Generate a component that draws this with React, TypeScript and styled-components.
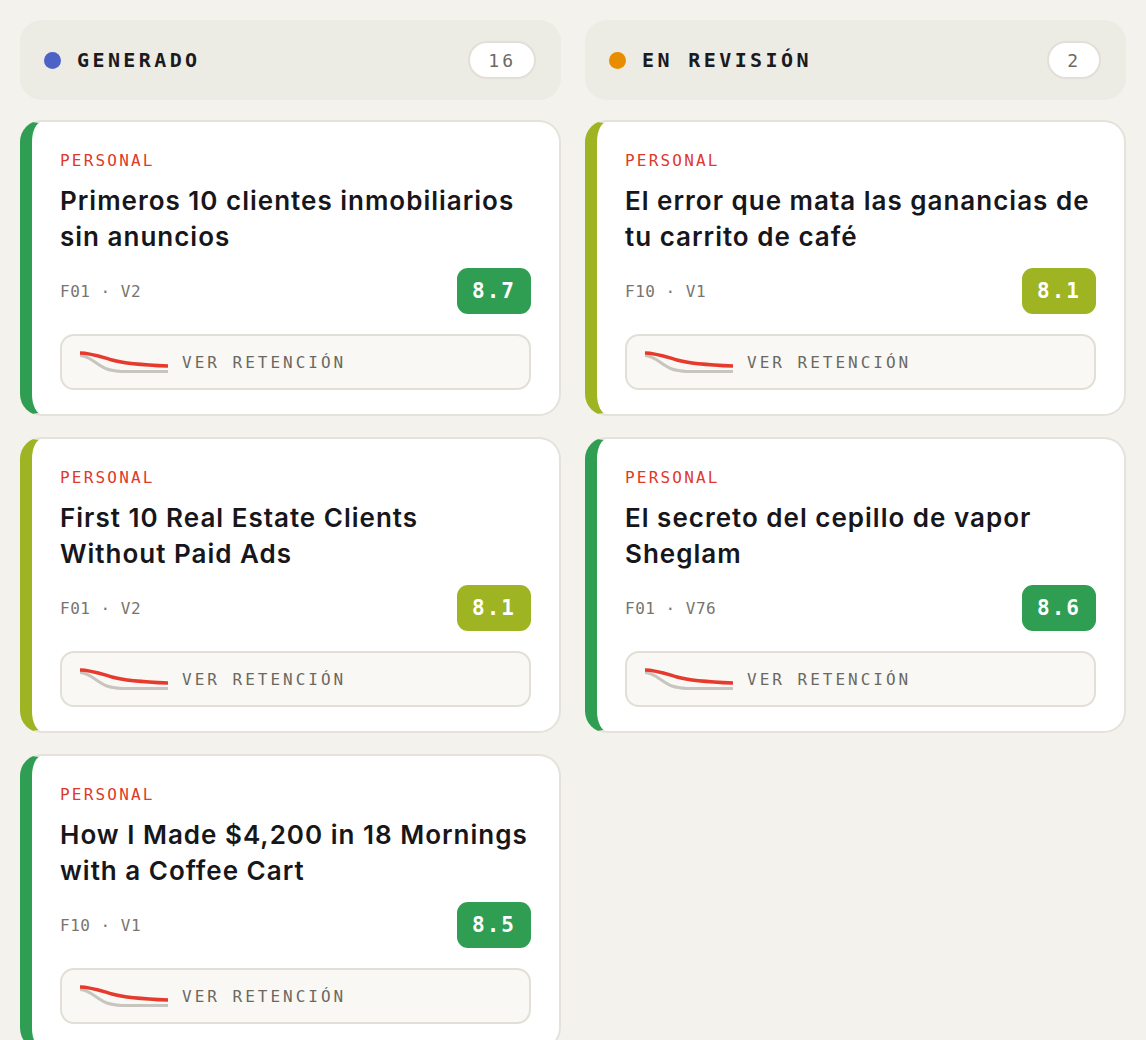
import styled, { createGlobalStyle } from "styled-components";

const GREEN = "#2f9e52";
const OLIVE = "#9fb422";

const MONO = `"DejaVu Sans Mono", "Liberation Mono", monospace`;
const SANS = `Inter, "Noto Sans", "Liberation Sans", sans-serif`;

const GlobalStyle = createGlobalStyle`
  html, body {
    margin: 0;
    background: #f3f2ed;
  }
  * {
    box-sizing: border-box;
  }
`;

const Board = styled.div`
  display: grid;
  grid-template-columns: 1fr 1fr;
  gap: 24px;
  padding: 20px;
  align-items: start;
`;

const Column = styled.section`
  display: flex;
  flex-direction: column;
  gap: 21px;
`;

const ColumnHeader = styled.header`
  display: flex;
  align-items: center;
  height: 80px;
  margin-bottom: -1px;
  padding: 0 25px 0 24px;
  background: #ecebe4;
  border-radius: 22px;
`;

const Dot = styled.span<{ $color: string }>`
  width: 17px;
  height: 17px;
  border-radius: 50%;
  background: ${(p) => p.$color};
  margin-right: 16px;
`;

const ColumnTitle = styled.h2`
  flex: 1;
  margin: 0;
  font-family: ${MONO};
  font-size: 20px;
  font-weight: 600;
  letter-spacing: 3.4px;
  color: #1b1a1e;
`;

const CountPill = styled.span`
  display: flex;
  align-items: center;
  justify-content: center;
  min-width: 52px;
  height: 38px;
  padding: 0 18px;
  background: #fff;
  border: 2px solid #e2dfd8;
  border-radius: 19px;
  font-family: ${MONO};
  font-size: 18px;
  letter-spacing: 3px;
  color: #6d6a63;
`;

const Card = styled.article<{ $accent: string }>`
  background: #fff;
  border: 2px solid #e5e2db;
  border-left: 12px solid ${(p) => p.$accent};
  border-radius: 22px;
  padding: 29px 28px 24px 28px;
`;

const Tag = styled.div`
  font-family: ${MONO};
  font-size: 16px;
  line-height: 20px;
  letter-spacing: 2.2px;
  color: #e0382b;
`;

const Title = styled.h3`
  margin: 12px 0 0;
  font-family: ${SANS};
  font-size: 26px;
  font-weight: 600;
  line-height: 36px;
  letter-spacing: 1px;
  color: #17161a;
`;

const MetaRow = styled.div`
  display: flex;
  align-items: center;
  justify-content: space-between;
  margin-top: 13px;
`;

const Meta = styled.span`
  font-family: ${MONO};
  font-size: 16px;
  letter-spacing: 0.5px;
  color: #77756e;
`;

const Score = styled.span<{ $color: string }>`
  display: flex;
  align-items: center;
  justify-content: center;
  width: 74px;
  height: 46px;
  border-radius: 11px;
  background: ${(p) => p.$color};
  font-family: ${MONO};
  font-size: 21px;
  font-weight: 700;
  letter-spacing: 2px;
  color: #fff;
`;

const RetentionButton = styled.button`
  display: flex;
  align-items: center;
  gap: 14px;
  width: 100%;
  height: 56px;
  margin-top: 20px;
  padding: 0 18px;
  background: #f9f8f4;
  border: 2px solid #e2dfd7;
  border-radius: 14px;
  font-family: ${MONO};
  font-size: 16px;
  letter-spacing: 3px;
  color: #6b6862;
  cursor: pointer;
`;

function Sparkline() {
  return (
    <svg width="88" height="24" viewBox="0 0 88 24" fill="none">
      <path
        d="M0 5.5 C 10 5.5, 17 15.5, 27 19 S 50 21.5, 88 21.5"
        stroke="#c7c5bd"
        strokeWidth="3"
      />
      <path
        d="M0 3 C 10 3, 20 6.5, 32 10 S 62 15, 88 16"
        stroke="#e53a2c"
        strokeWidth="3.4"
      />
    </svg>
  );
}

type Item = {
  title: string;
  meta: string;
  score: string;
  color: string;
};

const columns: {
  name: string;
  dot: string;
  count: number;
  items: Item[];
}[] = [
  {
    name: "GENERADO",
    dot: "#4d62c6",
    count: 16,
    items: [
      {
        title: "Primeros 10 clientes inmobiliarios sin anuncios",
        meta: "F01 · V2",
        score: "8.7",
        color: GREEN,
      },
      {
        title: "First 10 Real Estate Clients Without Paid Ads",
        meta: "F01 · V2",
        score: "8.1",
        color: OLIVE,
      },
      {
        title: "How I Made $4,200 in 18 Mornings with a Coffee Cart",
        meta: "F10 · V1",
        score: "8.5",
        color: GREEN,
      },
    ],
  },
  {
    name: "EN REVISIÓN",
    dot: "#e88c00",
    count: 2,
    items: [
      {
        title: "El error que mata las ganancias de tu carrito de café",
        meta: "F10 · V1",
        score: "8.1",
        color: OLIVE,
      },
      {
        title: "El secreto del cepillo de vapor Sheglam",
        meta: "F01 · V76",
        score: "8.6",
        color: GREEN,
      },
    ],
  },
];

export default function App() {
  return (
    <>
      <GlobalStyle />
      <Board>
        {columns.map((col) => (
          <Column key={col.name}>
            <ColumnHeader>
              <Dot $color={col.dot} />
              <ColumnTitle>{col.name}</ColumnTitle>
              <CountPill>{col.count}</CountPill>
            </ColumnHeader>
            {col.items.map((item, i) => (
              <Card key={i} $accent={item.color}>
                <Tag>PERSONAL</Tag>
                <Title>{item.title}</Title>
                <MetaRow>
                  <Meta>{item.meta}</Meta>
                  <Score $color={item.color}>{item.score}</Score>
                </MetaRow>
                <RetentionButton>
                  <Sparkline />
                  VER RETENCIÓN
                </RetentionButton>
              </Card>
            ))}
          </Column>
        ))}
      </Board>
    </>
  );
}
